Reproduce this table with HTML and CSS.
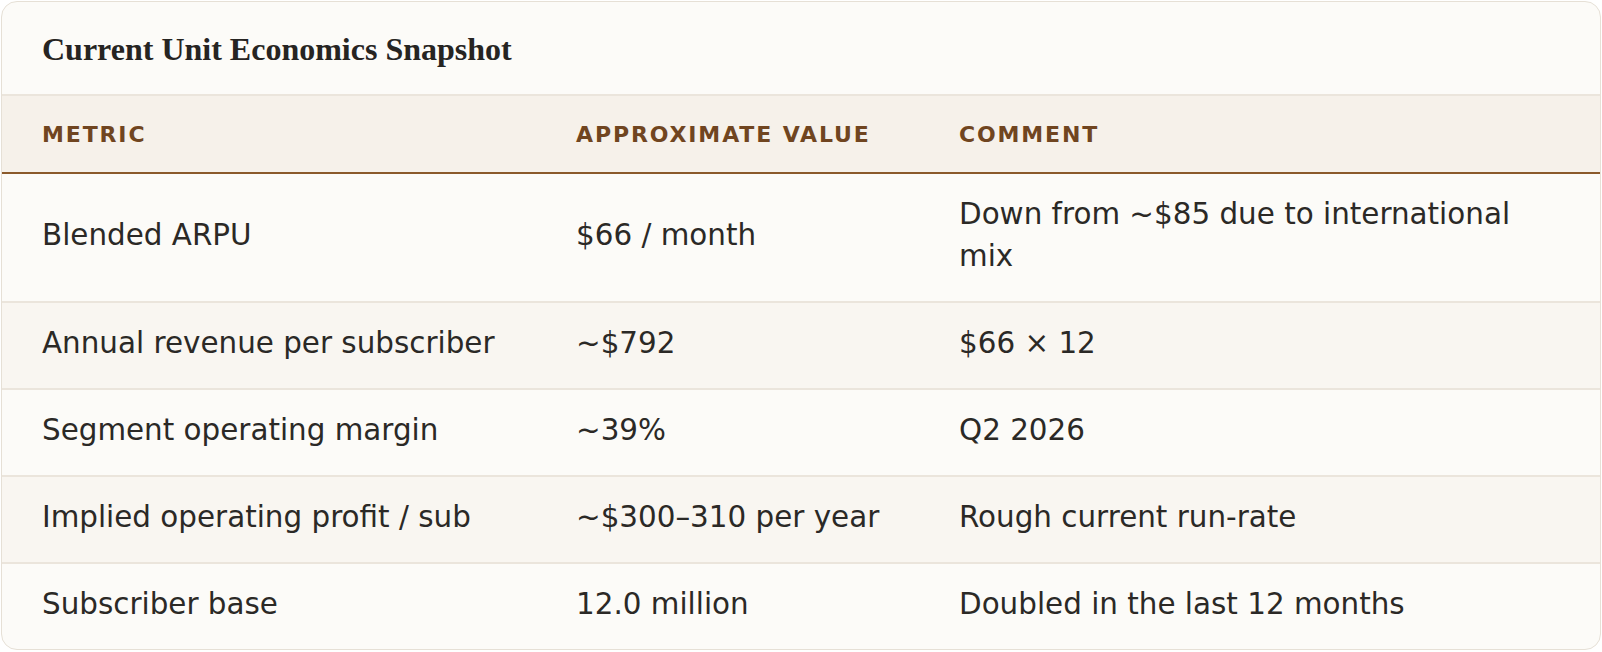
FILE: index.html
```html
<!DOCTYPE html>
<html lang="en">
<head>
<meta charset="utf-8">
<title>Current Unit Economics Snapshot</title>
<link rel="stylesheet" href="styles.css">
</head>
<body>
<section class="card">
  <h2 class="card-title">Current Unit Economics Snapshot</h2>
  <table class="econ">
    <colgroup>
      <col class="c1"><col class="c2"><col class="c3">
    </colgroup>
    <thead>
      <tr><th>Metric</th><th>Approximate Value</th><th>Comment</th></tr>
    </thead>
    <tbody>
      <tr><td>Blended ARPU</td><td>$66 / month</td><td>Down from ~$85 due to international mix</td></tr>
      <tr><td>Annual revenue per subscriber</td><td>~$792</td><td>$66 × 12</td></tr>
      <tr><td>Segment operating margin</td><td>~39%</td><td>Q2 2026</td></tr>
      <tr><td>Implied operating profit / sub</td><td>~$300–310 per year</td><td>Rough current run-rate</td></tr>
      <tr><td>Subscriber base</td><td>12.0 million</td><td>Doubled in the last 12 months</td></tr>
    </tbody>
  </table>
</section>
</body>
</html>
```
FILE: styles.css
```css
html, body {
  margin: 0;
  padding: 0;
  background: #ffffff;
}
body {
  padding: 1px;
  font-family: "DejaVu Sans", sans-serif;
  color: #2b2926;
}
.card {
  background: #fcfbf8;
  border: 1px solid #e6e0d6;
  border-radius: 16px;
  overflow: hidden;
}
.card-title {
  margin: 0;
  padding: 29px 40px 27px;
  line-height: 36px;
  font-family: "Liberation Serif", "Times New Roman", serif;
  font-weight: 700;
  font-size: 32px;
  color: #262422;
  border-bottom: 2px solid #ebe5dc;
}
.econ {
  width: 100%;
  border-collapse: collapse;
  table-layout: fixed;
}
.c1 { width: 534px; }
.c2 { width: 383px; }
.econ th {
  background: #f6f1ea;
  color: #704520;
  text-align: left;
  text-transform: uppercase;
  font-weight: 700;
  font-size: 22px;
  line-height: 26px;
  letter-spacing: 0.085em;
  padding: 26px 0 24px 40px;
  border-bottom: 2px solid #8b5a2b;
}
.econ td {
  font-size: 29.4px;
  line-height: 41.5px;
  padding: 20px 20px 23.5px 40px;
  vertical-align: middle;
  border-bottom: 2px solid #ebe5dc;
}
.econ td:last-child {
  padding-right: 40px;
}
.econ tbody tr:nth-child(even) td {
  background: #f9f6f1;
}
.econ tbody tr:last-child td {
  border-bottom: none;
}
```
